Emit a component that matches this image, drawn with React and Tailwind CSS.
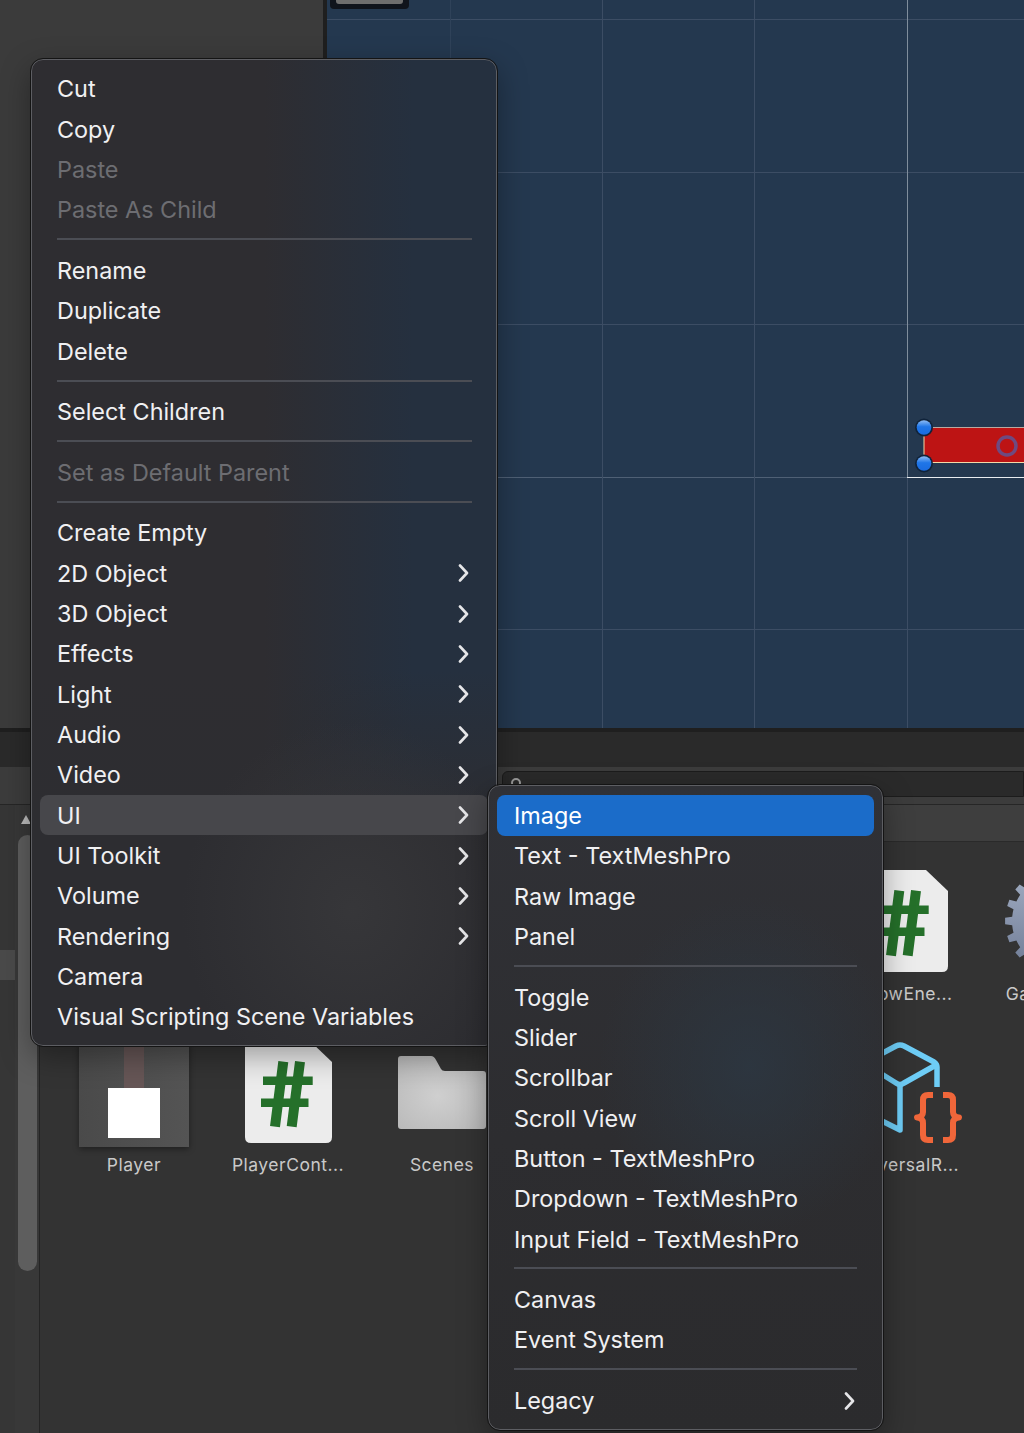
import React from 'react';

const mainMenu = [
  { label: 'Cut' },
  { label: 'Copy' },
  { label: 'Paste', disabled: true },
  { label: 'Paste As Child', disabled: true },
  { sep: true },
  { label: 'Rename' },
  { label: 'Duplicate' },
  { label: 'Delete' },
  { sep: true },
  { label: 'Select Children' },
  { sep: true },
  { label: 'Set as Default Parent', disabled: true },
  { sep: true },
  { label: 'Create Empty' },
  { label: '2D Object', sub: true },
  { label: '3D Object', sub: true },
  { label: 'Effects', sub: true },
  { label: 'Light', sub: true },
  { label: 'Audio', sub: true },
  { label: 'Video', sub: true },
  { label: 'UI', sub: true, hover: true },
  { label: 'UI Toolkit', sub: true },
  { label: 'Volume', sub: true },
  { label: 'Rendering', sub: true },
  { label: 'Camera' },
  { label: 'Visual Scripting Scene Variables' },
];

const uiMenu = [
  { label: 'Image', active: true },
  { label: 'Text - TextMeshPro' },
  { label: 'Raw Image' },
  { label: 'Panel' },
  { sep: true },
  { label: 'Toggle' },
  { label: 'Slider' },
  { label: 'Scrollbar' },
  { label: 'Scroll View' },
  { label: 'Button - TextMeshPro' },
  { label: 'Dropdown - TextMeshPro' },
  { label: 'Input Field - TextMeshPro' },
  { sep: true },
  { label: 'Canvas' },
  { label: 'Event System' },
  { sep: true },
  { label: 'Legacy', sub: true },
];

const Chevron = () => (
  <svg width="11" height="18" viewBox="0 0 11 18" fill="none" className="shrink-0">
    <path d="M2 1.5 L9 9 L2 16.5" stroke="#e6e6e8" strokeWidth="2.6" strokeLinecap="round" strokeLinejoin="round" />
  </svg>
);

const MenuRows = ({ items, sepClass }) =>
  items.map((item, i) => {
    if (item.sep) {
      return (
        <div key={i} className={`h-[20.25px] pb-[2px] flex items-center ml-[25px] ${sepClass}`}>
          <div className="h-[2px] w-full bg-[#4b4d54]" />
        </div>
      );
    }
    let rowClass = 'text-[#f0f0f2]';
    if (item.disabled) rowClass = 'text-[#6d6d72]';
    if (item.hover) rowClass = 'text-[#f0f0f2] bg-[#47474b]';
    if (item.active) rowClass = 'text-white bg-[#1b6cc9]';
    return (
      <div
        key={i}
        className={`h-[40.33px] mx-[8px] pl-[17px] pr-[19px] rounded-[8px] flex items-center justify-between ${rowClass}`}
      >
        <span className="pt-[1px]">{item.label}</span>
        {item.sub && <Chevron />}
      </div>
    );
  });

const SceneView = () => (
  <svg viewBox="327 0 697 728" className="w-full h-full block" preserveAspectRatio="none">
    <rect x="327" y="0" width="697" height="728" fill="#24384f" />
    {[19, 172, 324, 629].map((y) => (
      <line key={y} x1="327" x2="1024" y1={y + 0.5} y2={y + 0.5} stroke="#3c4d64" strokeWidth="1" />
    ))}
    <line x1="327" x2="907" y1="477.5" y2="477.5" stroke="#4f6075" strokeWidth="1" />
    <line x1="450.5" x2="450.5" y1="0" y2="728" stroke="#2f4259" strokeWidth="1" />
    <line x1="602.5" x2="602.5" y1="0" y2="728" stroke="#3c4d64" strokeWidth="1" />
    <line x1="754.5" x2="754.5" y1="0" y2="728" stroke="#3c4d64" strokeWidth="1" />
    <line x1="907.5" x2="907.5" y1="0" y2="477" stroke="#7f8d9c" strokeWidth="1" />
    <line x1="907.5" x2="907.5" y1="478" y2="728" stroke="#3c4d64" strokeWidth="1" />
    <line x1="907" x2="1024" y1="477.5" y2="477.5" stroke="#e8ecf0" strokeWidth="1" />

    <rect x="330" y="-6" width="79" height="15" rx="4" fill="#10141c" />
    <rect x="336" y="-6" width="67" height="10" rx="3" fill="#6e6e6e" />

    <rect x="924" y="427.5" width="110" height="35" fill="#bd1414" stroke="#f4d9a8" strokeWidth="1" />
    <line x1="924" x2="1024" y1="427.5" y2="427.5" stroke="#b9a9a0" strokeWidth="1" />
    <circle cx="1007" cy="446" r="9" fill="none" stroke="#6e4a80" strokeWidth="3.5" />
    <defs>
      <linearGradient id="handle" x1="0" y1="0" x2="0" y2="1">
        <stop offset="0" stopColor="#8fbdf5" />
        <stop offset="0.45" stopColor="#1f76e8" />
        <stop offset="1" stopColor="#1a6be0" />
      </linearGradient>
    </defs>
    {[427.5, 463.5].map((cy) => (
      <g key={cy}>
        <circle cx="924" cy={cy} r="9" fill="#10233a" />
        <circle cx="924" cy={cy} r="7.3" fill="url(#handle)" />
      </g>
    ))}
  </svg>
);

const ScriptIcon = () => (
  <svg viewBox="0 0 87 102" className="w-[87px] h-[102px]">
    <path
      d="M5 0 H65 L87 21 V96 Q87 102 81 102 H6 Q0 102 0 96 V5 Q0 0 5 0 Z"
      fill="#ececec"
    />
    <g stroke="#25702a" fill="none">
      <path d="M38.3 20.7 L30 85.7 M55 20.7 L46.7 85.7" strokeWidth="10" />
      <path d="M18 39.8 H67.7 M16 61.8 H63.5" strokeWidth="8.5" />
    </g>
  </svg>
);

const gearPoints = () => {
  const teeth = 18;
  const pts = [];
  for (let i = 0; i < teeth; i++) {
    const a = (i / teeth) * Math.PI * 2;
    const step = (Math.PI * 2) / teeth;
    [[46, -0.5], [46, -0.26], [53, -0.18], [53, 0.18], [46, 0.26]].forEach(([r, f]) => {
      const t = a + f * step;
      pts.push(`${(53 + r * Math.cos(t)).toFixed(1)},${(53 + r * Math.sin(t)).toFixed(1)}`);
    });
  }
  return pts.join(' ');
};

const GearIcon = () => (
  <svg viewBox="0 0 106 106" className="w-[106px] h-[106px]">
    <defs>
      <linearGradient id="gear" x1="0" y1="0" x2="0" y2="1">
        <stop offset="0" stopColor="#a3afc4" />
        <stop offset="1" stopColor="#6d7a94" />
      </linearGradient>
    </defs>
    <polygon points={gearPoints()} fill="url(#gear)" />
  </svg>
);

const FolderIcon = () => (
  <svg viewBox="0 0 88 73" className="w-[88px] h-[73px]">
    <defs>
      <radialGradient id="folder" cx="0.45" cy="0.55" r="0.7">
        <stop offset="0" stopColor="#cfcfcf" />
        <stop offset="1" stopColor="#b8b8b8" />
      </radialGradient>
    </defs>
    <path
      d="M3 0 H33 Q36 0 38 4 L43 13 Q44 15 47 15 H85 Q88 15 88 18 V70 Q88 73 85 73 H3 Q0 73 0 70 V3 Q0 0 3 0 Z"
      fill="url(#folder)"
    />
  </svg>
);

const PlayerIcon = () => (
  <div className="w-[110px] h-[110px] bg-gradient-to-r from-[#4a4a4a] to-[#545454] flex flex-col items-center shadow-[0_2px_6px_rgba(0,0,0,0.4)]">
    <div className="w-[20px] h-[51px] bg-[#665656]" />
    <div className="w-[52px] h-[50px] bg-white" />
  </div>
);

const ShaderIcon = () => (
  <svg viewBox="849 1037 110 110" className="w-[110px] h-[110px] overflow-visible" fill="none">
    <g stroke="#6ecdf6" strokeWidth="5.5" strokeLinejoin="round" strokeLinecap="round">
      <path d="M864 1063 L896 1046 Q900 1044 904 1046 L934 1062 Q937 1064 937 1067 V1087" strokeLinecap="butt" />
      <path d="M864 1063 L896 1083 Q900 1086 904 1083 L936 1065" />
      <path d="M900 1085 V1130 L864 1112 V1063" />
    </g>
    <g stroke="#f0663a" strokeWidth="6" strokeLinejoin="round">
      <path d="M933 1095 H928 Q923 1095 923 1100 V1112 Q923 1117 917 1117.5 Q923 1118 923 1123 V1135 Q923 1140 928 1140 H933" />
      <path d="M943 1095 H948 Q953 1095 953 1100 V1112 Q953 1117 959 1117.5 Q953 1118 953 1123 V1135 Q953 1140 948 1140 H943" />
    </g>
  </svg>
);

const assets = [
  null, null, null, null, null,
  { label: 'ShowEne...', icon: <ScriptIcon /> },
  { label: 'GameMan...', icon: <GearIcon /> },
  { label: 'Player', icon: <PlayerIcon /> },
  { label: 'PlayerCont...', icon: <ScriptIcon /> },
  { label: 'Scenes', icon: <FolderIcon /> },
  null, null,
  { label: 'UniversalR...', icon: <ShaderIcon /> },
];

const App = () => (
  <div className="relative w-[1024px] h-[1433px] overflow-hidden bg-[#333333] font-['Inter',sans-serif]">
    {/* top: hierarchy column + scene view */}
    <div className="flex h-[728px]">
      <div className="w-[323px] bg-[#3b3b3b]" />
      <div className="w-[4px] bg-[#1f1f1f]" />
      <div className="flex-1">
        <SceneView />
      </div>
    </div>

    {/* tab strip */}
    <div className="h-[4px] bg-[#1f1f1f]" />
    <div className="h-[35px] bg-[#2a2a2a]" />

    {/* toolbar with search */}
    <div className="h-[38px] bg-[#3c3c3c] pl-[502px] pt-[4px] pb-[7px] border-b border-[#262626]">
      <div className="h-full rounded-tl-[6px] border border-[#1c1c1c] bg-[#2a2a2a] pl-[8px] pt-[6px]">
        <div className="w-[10px] h-[10px] rounded-full border-2 border-[#a0a0a0]" />
      </div>
    </div>

    {/* project browser */}
    <div className="flex h-[628px]">
      <div className="w-[15px] bg-[#363636] pt-[145px]">
        <div className="h-[30px] bg-[#4a4a4a]" />
      </div>
      <div className="w-[24px] bg-[#383838] pl-[3px]">
        <div className="w-0 h-0 mt-[10px] ml-[3px] border-x-[5px] border-x-transparent border-b-[9px] border-b-[#bdbdbd]" />
        <div className="w-[19px] h-[436px] mt-[11px] rounded-full bg-[#5e5e5e]" />
      </div>
      <div className="w-px bg-[#242424]" />
      <div className="flex-1 flex flex-col min-w-0">
        <div className="h-[37px] bg-[#3e3e3e] border-b border-[#2a2a2a]" />
        <div className="flex-1 pl-[17px] pt-[24px] grid grid-cols-[repeat(7,154px)] auto-rows-[171px] text-[17.5px] tracking-[0.5px] text-[#c9c9c9]">
          {assets.map((asset, i) => (
            <div key={i} className="flex flex-col items-center">
              {asset && (
                <>
                  <div className="h-[110px] w-[110px] flex items-center justify-center">{asset.icon}</div>
                  <div className="mt-[6px] leading-[24px] whitespace-nowrap">{asset.label}</div>
                </>
              )}
            </div>
          ))}
        </div>
      </div>
    </div>

    {/* context menu */}
    <div className="absolute left-[31px] top-[59px] w-[466px] h-[987px] pt-[8.83px] rounded-[12px] border border-[#5d5e63] outline outline-[#141414] bg-[radial-gradient(ellipse_170px_190px_at_320px_850px,rgba(62,62,64,0.55),transparent),linear-gradient(to_bottom,transparent_62%,#2d2d31_78%),linear-gradient(to_right,#2e2d31_50%,#25303f_82%)] shadow-[0_10px_30px_rgba(0,0,0,0.35)] text-[23.4px] leading-[30px] whitespace-nowrap">
      <MenuRows items={mainMenu} sepClass="mr-[24px]" />
    </div>

    {/* UI submenu */}
    <div className="absolute left-[488px] top-[785px] w-[395px] h-[645px] pt-[9.4px] rounded-[12px] border border-[#5d5e63] outline outline-[#141414] bg-[radial-gradient(ellipse_150px_170px_at_260px_280px,rgba(44,56,68,0.75),transparent),linear-gradient(to_bottom,#303136,#2d2d30_55%,#2b2b2d)] shadow-[0_10px_30px_rgba(0,0,0,0.35)] text-[23.4px] leading-[30px] whitespace-nowrap">
      <MenuRows items={uiMenu} sepClass="mr-[25px]" />
    </div>
  </div>
);

export default App;
